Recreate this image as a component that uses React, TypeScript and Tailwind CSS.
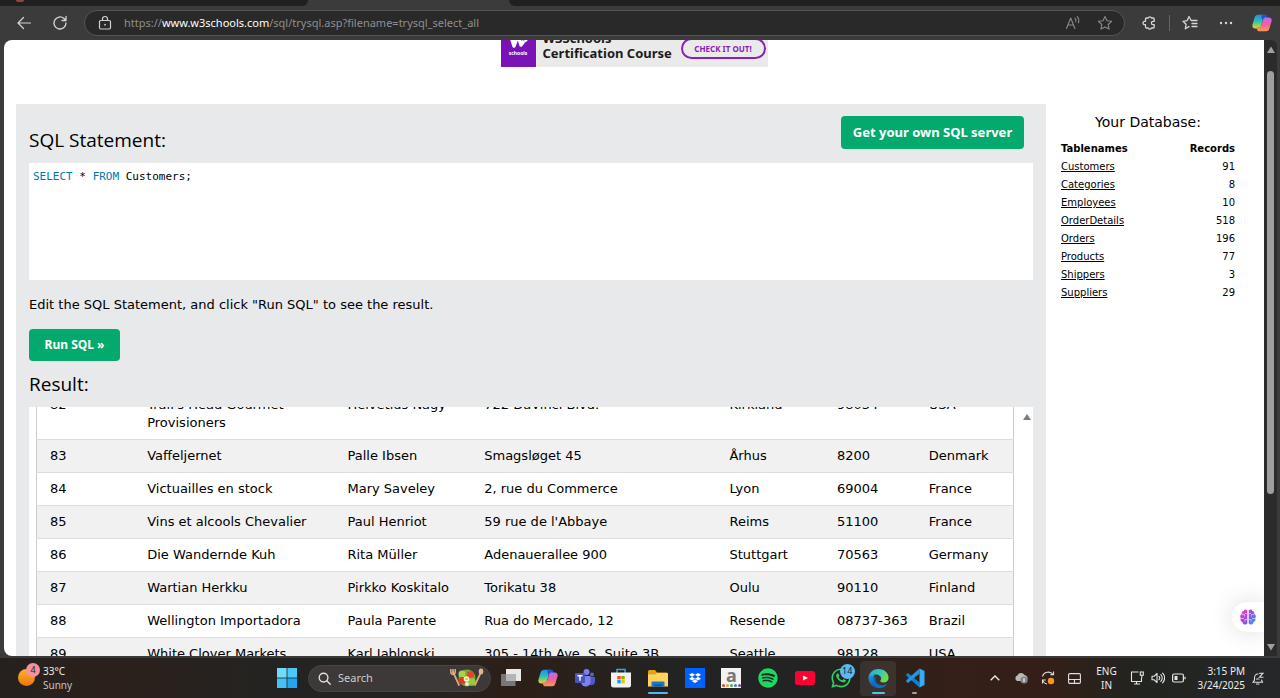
import { useId, useState } from "react";
import type { ReactNode } from "react";
import { FaDropbox, FaSpotify, FaWhatsapp } from "react-icons/fa";

type Customer = [string, string, string, string, string, string, string];

const customers: Customer[] = [
  ["82", "Trail's Head Gourmet Provisioners", "Helvetius Nagy", "722 DaVinci Blvd.", "Kirkland", "98034", "USA"],
  ["83", "Vaffeljernet", "Palle Ibsen", "Smagsløget 45", "Århus", "8200", "Denmark"],
  ["84", "Victuailles en stock", "Mary Saveley", "2, rue du Commerce", "Lyon", "69004", "France"],
  ["85", "Vins et alcools Chevalier", "Paul Henriot", "59 rue de l'Abbaye", "Reims", "51100", "France"],
  ["86", "Die Wandernde Kuh", "Rita Müller", "Adenauerallee 900", "Stuttgart", "70563", "Germany"],
  ["87", "Wartian Herkku", "Pirkko Koskitalo", "Torikatu 38", "Oulu", "90110", "Finland"],
  ["88", "Wellington Importadora", "Paula Parente", "Rua do Mercado, 12", "Resende", "08737-363", "Brazil"],
  ["89", "White Clover Markets", "Karl Jablonski", "305 - 14th Ave. S. Suite 3B", "Seattle", "98128", "USA"],
];

const tables: [string, number][] = [
  ["Customers", 91],
  ["Categories", 8],
  ["Employees", 10],
  ["OrderDetails", 518],
  ["Orders", 196],
  ["Products", 77],
  ["Shippers", 3],
  ["Suppliers", 29],
];

function IconButton({ label, className = "", children }: { label: string; className?: string; children: ReactNode }) {
  return (
    <button type="button" aria-label={label} className={`flex shrink-0 items-center justify-center ${className}`}>
      {children}
    </button>
  );
}

function CopilotIcon() {
  const id = useId();
  return (
    <svg viewBox="0 0 24 24" className="size-5">
      <defs>
        <linearGradient id={`${id}a`} x1="0" y1="0" x2="0" y2="1">
          <stop offset="0" stopColor="#1c8fe8" />
          <stop offset=".5" stopColor="#2cc3b0" />
          <stop offset="1" stopColor="#f3d323" />
        </linearGradient>
        <linearGradient id={`${id}b`} x1="0" y1="0" x2="0" y2="1">
          <stop offset="0" stopColor="#b56cf5" />
          <stop offset=".5" stopColor="#f0609c" />
          <stop offset="1" stopColor="#fb9a4b" />
        </linearGradient>
      </defs>
      <path d="M7 2h8c2 0 2.500 1 3 2.600L18.800 7H16c-2 0-2.800 1-3.400 3l-2 6c-.6 2-1.300 2.500-3.200 2.500H4c-3 0-4.200-2-3.300-5L3.200 5C3.900 3 5 2 7 2z" fill={`url(#${id}a)`} />
      <path d="M14 2h1.500c1.500 0 2.300 1 2.700 2.600L19 7h-3c-1.600 0-2.500.6-3.200 2.400L11.200 4.500C11.600 2.800 12.500 2 14 2z" fill="#2450c8" />
      <path d="M17 22H9c-2 0-2.500-1-3-2.600L5.300 17H8c2 0 2.800-1 3.400-3l2-6c.6-2 1.300-2.500 3.200-2.500H20c3 0 4.200 2 3.300 5L20.800 19c-.7 2-1.800 3-3.800 3z" fill={`url(#${id}b)`} />
    </svg>
  );
}

function BrowserChrome() {
  return (
    <header className="shrink-0 bg-[#3b3b3b]">
      <div className="flex h-[6px]">
        <div className="flex w-[308px] rounded-br-md bg-[#202020] pl-4">
          <span className="h-[2px] w-2 rounded-b-full bg-[#8d4a3c]" />
        </div>
        <div className="w-[201px] bg-[#3b3b3b]" />
        <div className="flex-1 rounded-bl-md bg-[#202020]" />
      </div>
      <div className="flex h-[34px] items-center text-[#d6d6d6]">
        <IconButton label="Back" className="ml-3 w-6">
          <svg viewBox="0 0 16 16" className="size-4" fill="none" stroke="currentColor" strokeWidth="1.2" strokeLinecap="round" strokeLinejoin="round">
            <path d="M14.500 8H2M7.500 2.500 2 8l5.500 5.500" />
          </svg>
        </IconButton>
        <IconButton label="Refresh" className="ml-3 w-6">
          <svg viewBox="0 0 16 16" className="size-4" fill="none" stroke="currentColor" strokeWidth="1.300" strokeLinecap="round" strokeLinejoin="round">
            <path d="M14 8a6 6 0 1 1-2-4.500l1.800 1.700M14 1.500v4h-4" />
          </svg>
        </IconButton>
        <div className="ml-3 flex h-[26px] flex-1 items-center rounded-full border border-[#555] bg-[#292929] pr-[9px] pl-[13px]">
          <svg viewBox="0 0 14 16" className="h-4 w-[14px] shrink-0" fill="none" stroke="#d0d0d0" strokeWidth="1.200">
            <rect x="1.500" y="5.500" width="11" height="8.500" rx="1.200" />
            <path d="M4.500 5.500V4a2.500 2.500 0 0 1 5 0v1.500" />
            <circle cx="7" cy="9.700" r=".9" fill="#d0d0d0" stroke="none" />
          </svg>
          <p className="ml-3 flex-1 truncate font-['Noto_Sans',sans-serif] text-[11px] text-[#8f8f8f]">
            https://<span className="text-white">www.w3schools.com</span>/sql/trysql.asp?filename=trysql_select_all
          </p>
          <IconButton label="Read aloud" className="w-5 text-[#8a8a8a]">
            <svg viewBox="0 0 16 16" className="size-4" fill="none" stroke="currentColor" strokeWidth="1.100" strokeLinecap="round" strokeLinejoin="round">
              <path d="M1.500 13.500 5.700 3l4.200 10.500M3 10h5.500M10 3.200a4 4 0 0 1 .8 3.600M12.300 1.500a7 7 0 0 1 1.200 6.300" />
            </svg>
          </IconButton>
          <IconButton label="Add to favorites" className="ml-3 w-5 text-[#8a8a8a]">
            <svg viewBox="0 0 16 16" className="size-4" fill="none" stroke="currentColor" strokeWidth="1.100" strokeLinejoin="round">
              <path d="m8 1.500 2 4.200 4.600.6-3.400 3.200.9 4.600L8 11.900l-4.100 2.200.9-4.600L1.400 6.300l4.600-.6z" />
            </svg>
          </IconButton>
        </div>
        <IconButton label="Extensions" className="ml-[14px] w-5">
          <svg viewBox="0 0 16 16" className="size-4" fill="none" stroke="currentColor" strokeWidth="1.300" strokeLinejoin="round">
            <path d="M5.500 3h1.700a1.700 1.700 0 0 1 3.200 0h1.800a1 1 0 0 1 1 1v2.400h-1.200a1.600 1.600 0 0 0 0 3.200h1.200V12a1 1 0 0 1-1 1h-1.800a1.700 1.700 0 0 1-3.200 0H5.500a1 1 0 0 1-1-1V9.700h-.8a1.700 1.700 0 0 1 0-3.400h.8V4a1 1 0 0 1 1-1z" />
          </svg>
        </IconButton>
        <span className="ml-[10px] h-4 w-px bg-[#666]" />
        <IconButton label="Favorites" className="ml-[10px] w-5">
          <svg viewBox="0 0 16 16" className="size-4" fill="none" stroke="currentColor" strokeWidth="1.300" strokeLinecap="round" strokeLinejoin="round">
            <path d="M9.300 5.500H15M10 8.500h5M10 11.500h5M8.800 5 7 1.500 5.200 5.600l-4.200.7 3.100 3-.8 4.500L7 11.600" />
          </svg>
        </IconButton>
        <IconButton label="Settings and more" className="ml-4 w-5">
          <svg viewBox="0 0 16 16" className="size-4" fill="currentColor">
            <circle cx="3" cy="8" r="1.200" />
            <circle cx="8" cy="8" r="1.200" />
            <circle cx="13" cy="8" r="1.200" />
          </svg>
        </IconButton>
        <IconButton label="Copilot" className="mr-2 ml-4 w-5">
          <CopilotIcon />
        </IconButton>
      </div>
    </header>
  );
}

function Banner() {
  return (
    <a href="#certification" className="mx-auto flex h-[27px] w-[267px] items-end overflow-hidden bg-[#eaeaea] font-['Noto_Sans',sans-serif] font-bold">
      <span className="flex h-[50px] w-[35px] shrink-0 flex-col items-center justify-end bg-[#7a12b8] pb-[11px] text-white">
        <svg viewBox="0 0 24 24" className="size-6" fill="none" stroke="#fff" strokeWidth="3.500" strokeLinejoin="round">
          <path d="m4 7 4 13 4-11 3 10 3-4M16 8h5l-3 4 3 3" />
        </svg>
        <span className="text-[5px] leading-[6px]">schools</span>
      </span>
      <span className="ml-[7px] w-[138px] shrink-0 pb-[6px] text-[13px] leading-[15px] whitespace-nowrap text-[#1c1c1c]">
        W3Schools
        <br />
        Certification Course
      </span>
      <span className="mb-[8px] flex h-[21px] w-[85px] shrink-0 items-center justify-center rounded-full border-2 border-[#8a22b8] text-[8px] whitespace-nowrap text-[#8a22b8]">
        CHECK IT OUT!
      </span>
    </a>
  );
}

function SqlEditor() {
  const [sql, setSql] = useState("SELECT * FROM Customers;");
  return (
    <div className="relative h-[117px] bg-white font-['DejaVu_Sans_Mono',monospace] text-[11px] leading-4">
      <pre aria-hidden="true" className="px-1 py-[6px] font-[inherit] text-black">
        {sql.split(/(\bSELECT\b|\bFROM\b)/).map((part, i) => (
          <span key={i} className={part === "SELECT" || part === "FROM" ? "text-[#0077aa]" : ""}>
            {part}
          </span>
        ))}
      </pre>
      <textarea
        aria-label="SQL Statement"
        spellCheck={false}
        value={sql}
        onChange={(e) => setSql(e.target.value)}
        className="absolute inset-0 resize-none bg-transparent px-1 py-[6px] text-transparent caret-black outline-none"
      />
    </div>
  );
}

function ResultTable() {
  return (
    <div className="flex min-h-0 flex-1 overflow-hidden bg-white pl-[7px]">
      <div className="min-w-0 flex-1">
        <table className="-mt-[19px] w-full table-fixed border-collapse border border-[#ccc] text-[13px] leading-[18px] text-black">
          <colgroup>
            <col className="w-[10%]" />
            <col className="w-[20.500%]" />
            <col className="w-[14%]" />
            <col className="w-[25.100%]" />
            <col className="w-[11%]" />
            <col className="w-[9.400%]" />
            <col className="w-[10%]" />
          </colgroup>
          <tbody>
            {customers.map((row) => (
              <tr key={row[0]} className="border-b border-[#ddd] odd:bg-white even:bg-[#f1f1f1]">
                {row.map((cell, i) => (
                  <td key={i} className="py-[7px] pl-[13px] align-top last:pr-0">
                    {cell}
                  </td>
                ))}
              </tr>
            ))}
          </tbody>
        </table>
      </div>
      <div className="ml-[7px] flex w-3 justify-center pt-[6px]">
        <svg viewBox="0 0 8 8" className="size-2" fill="#7b7b7b">
          <path d="M4 1 8 7H0z" />
        </svg>
      </div>
    </div>
  );
}

function DatabasePanel() {
  return (
    <aside className="w-[218px] shrink-0 pt-2 pr-[29px] pl-[15px]">
      <h2 className="text-center text-[14px] leading-5">Your Database:</h2>
      <table className="mt-2 w-full text-[10px] leading-[18px]">
        <thead>
          <tr>
            <th className="p-0 text-left">Tablenames</th>
            <th className="p-0 text-right">Records</th>
          </tr>
        </thead>
        <tbody>
          {tables.map(([name, count]) => (
            <tr key={name}>
              <td className="p-0">
                <a href={`#${name}`} className="underline">
                  {name}
                </a>
              </td>
              <td className="p-0 text-right">{count}</td>
            </tr>
          ))}
        </tbody>
      </table>
    </aside>
  );
}

function BrainIcon() {
  const id = useId();
  return (
    <svg viewBox="0 0 18 18" className="size-[18px]">
      <defs>
        <linearGradient id={id} x1="0" y1="0" x2="18" y2="14" gradientUnits="userSpaceOnUse">
          <stop offset="0" stopColor="#f56a5c" />
          <stop offset=".4" stopColor="#c63ee0" />
          <stop offset=".65" stopColor="#7a5cf0" />
          <stop offset="1" stopColor="#2fa8f5" />
        </linearGradient>
      </defs>
      <g fill={`url(#${id})`}>
        <path d="M8.300 2.500C7.500 1 5.300 1.200 4.800 2.900 3 3 2.300 4.700 2.900 6 1 6.600.600 9 1.800 10.200c-.9 1.600 0 3.300 1.500 3.700C3.600 16.500 7 17.500 8.300 15.500z" />
        <path d="M9.700 2.500c.8-1.500 3-1.300 3.500.4 1.800.1 2.500 1.800 1.900 3.100 1.900.6 2.300 3 1.100 4.200.9 1.600 0 3.300-1.500 3.700-.3 2.600-3.700 3.600-5 1.600z" />
      </g>
      <path d="M3 6.500h2.500v2M2 10.500h3M8 5.500H6M8 11.500H6v2M15 6.500h-2.500v2M16 10.500h-3M10 5.500h2M10 11.500h2v2" fill="none" stroke="#fff" strokeWidth=".5" />
    </svg>
  );
}

function Page() {
  return (
    <div className="relative flex min-h-0 flex-1 pr-[3px] pl-1">
      <main className="relative flex min-w-0 flex-1 flex-col overflow-hidden rounded-l-lg bg-white font-['DejaVu_Sans',Verdana,sans-serif] text-black">
        <Banner />
        <div className="mt-[37px] flex min-h-0 flex-1 pl-3">
          <section className="flex min-w-0 flex-1 flex-col bg-[#e7e9eb] px-[13px]">
            <div className="flex h-[59px] justify-between pt-3 pr-[9px]">
              <h1 className="pt-[10px] font-['Open_Sans','Segoe_UI',sans-serif] text-[19px] leading-7">SQL Statement:</h1>
              <a href="#sql-server" className="flex h-[33px] w-[183px] items-center justify-center rounded-[4px] bg-[#04aa6d] font-['Noto_Sans',sans-serif] text-[13px] font-bold whitespace-nowrap text-white">
                Get your own SQL server
              </a>
            </div>
            <SqlEditor />
            <p className="mt-4 text-[13px] leading-[18px]">Edit the SQL Statement, and click "Run SQL" to see the result.</p>
            <button type="button" className="mt-[15px] flex h-8 w-[91px] shrink-0 items-center justify-center self-start rounded-[4px] bg-[#04aa6d] font-['Noto_Sans',sans-serif] text-xs font-bold text-white">
              Run SQL »
            </button>
            <h2 className="mt-[9px] mb-[9px] font-['Open_Sans','Segoe_UI',sans-serif] text-[19px] leading-7">Result:</h2>
            <ResultTable />
          </section>
          <DatabasePanel />
        </div>
        <button type="button" aria-label="Open assistant" className="absolute right-0 bottom-6 flex h-[30px] w-8 items-center justify-center rounded-l-full bg-white shadow-[0_0_24px_rgba(0,0,0,0.14)]">
          <BrainIcon />
        </button>
      </main>
      <div className="flex w-[13px] flex-col items-center rounded-tr-md bg-[#2b2b2b] pt-[6px] pb-[5px]">
        <svg viewBox="0 0 8 8" className="size-2" fill="#a0a0a0">
          <path d="M4 0.500 8 7H0z" />
        </svg>
        <div className="mt-[17px] flex w-full flex-1 justify-center">
          <div className="h-[74%] w-[7px] rounded-full bg-[#9e9e9e]" />
        </div>
        <svg viewBox="0 0 8 8" className="size-2" fill="#a0a0a0">
          <path d="M4 7.500 8 1H0z" />
        </svg>
      </div>
    </div>
  );
}

function TaskbarApp({ label, active = false, marker = "", children }: { label: string; active?: boolean; marker?: string; children: ReactNode }) {
  return (
    <button type="button" aria-label={label} className={`relative flex h-[35px] flex-1 items-center justify-center rounded ${active ? "bg-white/8" : ""}`}>
      {children}
      {marker && <span className={`absolute bottom-[2px] h-[2px] rounded-full ${marker}`} />}
    </button>
  );
}

function SaladIcon() {
  return (
    <svg viewBox="0 0 34 20" className="h-5 w-[34px]">
      <path d="m3 4 6 13M31 4l-6 13" stroke="#d9a679" strokeWidth="1.800" strokeLinecap="round" />
      <path d="M.8 1v3c0 3 4.400 3 4.400.5V1M3 1v4" fill="none" stroke="#e2b58a" strokeWidth="1.400" />
      <ellipse cx="31" cy="3.500" rx="2.300" ry="3" fill="#e2b58a" />
      <circle cx="17" cy="10" r="8.500" fill="#6fae35" />
      <circle cx="12" cy="6" r="3.500" fill="#a6d34e" />
      <circle cx="22" cy="14" r="3.800" fill="#97c93f" />
      <circle cx="12" cy="12.500" r="3.600" fill="#d83a25" />
      <circle cx="20.500" cy="6.500" r="3.600" fill="#e5452b" />
      <circle cx="16.500" cy="11" r="2.800" fill="#fff6dd" />
      <circle cx="16.500" cy="11" r="1.300" fill="#f5b829" />
      <circle cx="17" cy="16" r="2" fill="#f2ead0" />
    </svg>
  );
}

function TeamsIcon() {
  return (
    <svg viewBox="0 0 20 20" className="size-5">
      <circle cx="17" cy="6.500" r="2" fill="#5a62c3" />
      <circle cx="11.500" cy="4" r="3" fill="#7b83eb" />
      <path d="M14.500 9H20v5a3.500 3.500 0 0 1-5.500 2.500z" fill="#5059c9" />
      <path d="M6.500 8h9v6a4.800 4.800 0 0 1-9 2z" fill="#7b83eb" />
      <rect y="5" width="10" height="10" rx="1" fill="#4b53bc" />
      <path d="M2.500 7.700h5M5 7.700v5" stroke="#fff" strokeWidth="1.400" />
    </svg>
  );
}

function StoreIcon() {
  return (
    <svg viewBox="0 0 20 20" className="size-5">
      <path d="M6 5V1.500h8V5" fill="none" stroke="#35a8e0" strokeWidth="1.500" />
      <path d="M0 4.500h20V17a2.500 2.500 0 0 1-2.500 2.500h-15A2.500 2.500 0 0 1 0 17z" fill="#f2f2f2" />
      <path d="M6.300 8h3.400v3.400H6.300z" fill="#f25022" />
      <path d="M10.300 8h3.400v3.400h-3.400z" fill="#7fba00" />
      <path d="M6.300 12h3.400v3.400H6.300z" fill="#00a4ef" />
      <path d="M10.300 12h3.400v3.400h-3.400z" fill="#ffb900" />
    </svg>
  );
}

function ExplorerIcon() {
  return (
    <svg viewBox="0 0 20 18" className="h-[18px] w-5">
      <path d="M0 2.500A1.500 1.500 0 0 1 1.500 1H7l2 2.500h9.500A1.500 1.500 0 0 1 20 5v2H0z" fill="#e3a21a" />
      <path d="M0 5.500h7l2-1.500h10a1 1 0 0 1 1 1v12.500H0z" fill="#ffd45c" />
      <path d="M3.500 17.500v-4a1 1 0 0 1 1-1h11a1 1 0 0 1 1 1v4z" fill="#1a77c9" />
      <path d="M6 15.500h8v2H6z" fill="#0f5a9e" />
    </svg>
  );
}

function EdgeIcon() {
  const id = useId();
  return (
    <svg viewBox="0 0 24 24" className="size-[21px]">
      <defs>
        <linearGradient id={`${id}a`} x1="0" y1="0" x2="1" y2=".4">
          <stop offset="0" stopColor="#2ba5e8" />
          <stop offset=".6" stopColor="#36c9b8" />
          <stop offset="1" stopColor="#6ddc4e" />
        </linearGradient>
        <linearGradient id={`${id}b`} x1="0" y1="0" x2="0" y2="1">
          <stop offset="0" stopColor="#1b9de2" />
          <stop offset="1" stopColor="#1153a8" />
        </linearGradient>
      </defs>
      <path d="M.5 11C1.500 4.500 6 1 12 1c7 0 11.500 5 11.500 10 0 3.500-2.500 5.500-5.800 5.500-3 0-4.300-1.200-3.500-2.300.8-1 .8-1.700.8-2.200 0-2.500-2.600-4.500-6-4.500-4 0-7 2-8.500 3.500z" fill={`url(#${id}a)`} />
      <path d="M.5 11C2 8.500 5 7.200 8.500 7.500 5.800 9 6 13 7.500 16c2 4 6 6 10.500 5.200A11.500 11.500 0 0 1 .5 12z" fill={`url(#${id}b)`} />
      <path d="M9.500 10c-2 2.500-1.300 6.500 1.500 8.300 3.500 2.200 8 1.500 11-.3-2 3.200-5.300 5.300-9 5-5-.5-8-5-7-9.500.3-1.800 1.700-3.200 3.500-3.500z" fill="#0d6fc4" />
    </svg>
  );
}

function VsCodeIcon() {
  return (
    <svg viewBox="0 0 20 20" className="size-5">
      <path d="M1.300 6.300 3 5l11.500 9.500V19.500L1.300 7.700z" fill="#1580c5" />
      <path d="M1.300 13.700 3 15 14.500 5.500V.5L1.300 12.300z" fill="#2196e3" />
      <path d="M14.500.5 19.500 3v14l-5 2.500z" fill="#35adf5" />
    </svg>
  );
}

function AmazonIcon() {
  return (
    <span className="flex size-5 flex-col items-center justify-between bg-[#f2f2f2] pb-px font-['Noto_Sans',sans-serif] text-lg leading-[15px] font-bold text-[#777]">
      a
      <span className="flex gap-px">
        <span className="size-[3px] rounded-full bg-[#e33b2e]" />
        <span className="size-[3px] rounded-full bg-[#f29a1f]" />
        <span className="size-[3px] rounded-full bg-[#55a845]" />
        <span className="size-[3px] rounded-full bg-[#2e7fd0]" />
        <span className="size-[3px] rounded-full bg-[#8347b5]" />
      </span>
    </span>
  );
}

function Taskbar() {
  return (
    <footer className="flex h-[40px] shrink-0 items-center bg-[linear-gradient(90deg,#26211f_0%,#2b201b_9%,#252321_20%,#252321_32%,#2d1f18_40%,#232322_52%,#222322_64%,#351f18_74%,#331f18_82%,#22241f_89%,#25272a_100%)] font-['Noto_Sans',sans-serif] text-[#eee]">
      <button type="button" className="flex w-[268px] items-center pl-[18px] text-left text-[10px] leading-[14px]">
        <span className="relative size-5">
          <span className="absolute bottom-[2px] left-0 size-[17px] rounded-full bg-linear-to-b from-[#ffb02a] to-[#e8780a]" />
          <span className="absolute -top-[5px] left-2 flex size-[14px] items-center justify-center rounded-full bg-[#f7919b] text-[9px] text-[#222]">4</span>
        </span>
        <span className="ml-[5px]">
          33°C
          <br />
          <span className="text-[#c4c4c4]">Sunny</span>
        </span>
      </button>
      <IconButton label="Start" className="w-[38px]">
        <svg viewBox="0 0 20 20" className="size-5">
          <path d="M0 0h9.600v9.600H0z" fill="#6fdcfb" />
          <path d="M10.400 0H20v9.600h-9.600z" fill="#4cc8f8" />
          <path d="M0 10.400h9.600V20H0z" fill="#44c2f7" />
          <path d="M10.400 10.400H20V20h-9.600z" fill="#1fa7f2" />
        </svg>
      </IconButton>
      <label className="ml-[2px] flex h-[27px] w-[183px] items-center rounded-full border border-[#484542] bg-[#3c3938] pr-[6px] pl-[9px]">
        <svg viewBox="0 0 14 14" className="size-[13px] shrink-0" fill="none" stroke="#e0e0e0" strokeWidth="1.500" strokeLinecap="round">
          <circle cx="6" cy="6" r="4.700" />
          <path d="m9.500 9.500 3.700 3.700" />
        </svg>
        <input aria-label="Search" placeholder="Search" className="ml-[7px] w-0 min-w-0 flex-1 bg-transparent text-[11px] outline-none placeholder:text-[#ccc]" />
        <SaladIcon />
      </label>
      <nav className="ml-[2px] flex w-[440px] items-center">
        <TaskbarApp label="Task view">
          <svg viewBox="0 0 20 20" className="size-5">
            <path d="M5 1h15v12H5z" fill="#e9e9e9" />
            <path d="M0 6h14.500v12H0z" fill="#777" />
            <path d="M5 6h9.500v7H5z" fill="#b5b5b5" />
          </svg>
        </TaskbarApp>
        <TaskbarApp label="Copilot">
          <CopilotIcon />
        </TaskbarApp>
        <TaskbarApp label="Teams">
          <TeamsIcon />
        </TaskbarApp>
        <TaskbarApp label="Microsoft Store">
          <StoreIcon />
        </TaskbarApp>
        <TaskbarApp label="File Explorer" marker="w-5 bg-[#55b7e8]">
          <ExplorerIcon />
        </TaskbarApp>
        <TaskbarApp label="Dropbox">
          <span className="flex size-5 items-center justify-center bg-[#0061fe]">
            <FaDropbox className="size-3 text-white" />
          </span>
        </TaskbarApp>
        <TaskbarApp label="Amazon">
          <AmazonIcon />
        </TaskbarApp>
        <TaskbarApp label="Spotify">
          <FaSpotify className="size-5 text-[#1ed760]" />
        </TaskbarApp>
        <TaskbarApp label="YouTube">
          <svg viewBox="0 0 20 14" className="h-[14px] w-5">
            <rect width="20" height="14" rx="2.500" fill="#ff0033" />
            <path d="m8 4.500 5 2.500-5 2.500z" fill="#fff" />
          </svg>
        </TaskbarApp>
        <TaskbarApp label="WhatsApp">
          <FaWhatsapp className="size-[22px] text-[#2bd366]" />
          <span className="absolute top-[3px] right-[5px] flex size-[15px] items-center justify-center rounded-full bg-[#5cb8f0] text-[9px] text-[#10202c]">14</span>
        </TaskbarApp>
        <TaskbarApp label="Edge" active marker="w-[13px] bg-[#55c2ea]">
          <EdgeIcon />
        </TaskbarApp>
        <TaskbarApp label="Visual Studio Code" marker="w-[5px] bg-[#a5a09c]">
          <VsCodeIcon />
        </TaskbarApp>
      </nav>
      <div className="ml-auto flex items-center pr-4 text-[10px] leading-[14px]">
        <IconButton label="Show hidden icons" className="w-[26px]">
          <svg viewBox="0 0 10 6" className="h-[6px] w-[10px]" fill="none" stroke="currentColor" strokeWidth="1.300">
            <path d="M.7 5.200 5 1l4.300 4.200" />
          </svg>
        </IconButton>
        <IconButton label="OneDrive" className="w-[26px]">
          <svg viewBox="0 0 14 12" className="h-3 w-[14px]">
            <path d="M3 9a3 3 0 0 1 .3-5.500A4 4 0 0 1 10.500 3C13 3.500 14 5.500 13.300 7.500 13 8.500 12 9 11 9z" fill="#b9b9b9" />
            <circle cx="10" cy="8" r="3.600" fill="#858585" />
            <path d="M10 6.300v3.400" stroke="#fff" strokeWidth="1.200" />
          </svg>
        </IconButton>
        <IconButton label="Windows Update" className="w-[27px]">
          <svg viewBox="0 0 14 14" className="size-[14px]" fill="none" stroke="#e0e0e0" strokeWidth="1.100">
            <path d="M1.500 5.500A6 6 0 0 1 12 3.500M12.500.5v3.200H9.300M1.500 8.500A6 6 0 0 0 6 13M1.500 12.500V9h3.300" />
            <circle cx="10" cy="10" r="3.200" fill="#f79a1c" stroke="none" />
          </svg>
        </IconButton>
        <IconButton label="Touchpad" className="w-[27px]">
          <svg viewBox="0 0 13 11" className="h-[11px] w-[13px]" fill="none" stroke="#e0e0e0" strokeWidth="1.100">
            <rect x=".6" y=".6" width="11.800" height="9.800" rx="1.200" />
            <path d="M.6 6.500h11.800M6.500 6.500v4" />
          </svg>
        </IconButton>
        <button type="button" className="w-[37px] text-center">
          ENG
          <br />
          IN
        </button>
        <button type="button" aria-label="Network, volume, battery" className="flex w-[65px] items-center justify-center gap-[7px]">
          <svg viewBox="0 0 14 14" className="size-[14px]" fill="none" stroke="#e6e6e6" strokeWidth="1.100">
            <path d="M8.500 1H1.500v9.500h10V6.500M4 13h6M6.500 10.500V13" />
            <rect x="10.300" y="1" width="3" height="3.200" />
            <path d="M11.800 4.200v2.500" />
          </svg>
          <svg viewBox="0 0 14 12" className="h-3 w-[14px]" fill="none" stroke="#e6e6e6" strokeWidth="1.100" strokeLinecap="round" strokeLinejoin="round">
            <path d="M1 4.300h2L6 1.500v9L3 7.700H1zM8 4.300a2.500 2.500 0 0 1 0 3.400M9.800 2.700a4.600 4.600 0 0 1 0 6.600M11.600 1.200a6.800 6.800 0 0 1 0 9.600" />
          </svg>
          <svg viewBox="0 0 14 10" className="h-[10px] w-[14px]" fill="none" stroke="#e6e6e6" strokeWidth="1.200">
            <rect x=".6" y="1" width="10.800" height="8" rx="1.500" />
            <path d="M13 3.700v2.600" />
            <path d="M2.500 3h3v4h-3z" fill="#e6e6e6" stroke="none" />
          </svg>
        </button>
        <button type="button" className="w-[55px] text-right whitespace-nowrap">
          3:15 PM
          <br />
          3/24/2025
        </button>
        <IconButton label="Notifications" className="ml-[7px] w-3">
          <svg viewBox="0 0 12 13" className="h-[13px] w-3" fill="none" stroke="#e0e0e0" strokeWidth="1.100" strokeLinecap="round">
            <path d="M6 2C3.500 2 2.500 4 2.500 6v2L1 10.300h9.500L9.500 8M4.500 12h2.500M7.500 1.200h3.500l-3.500 4H11M4.500 7h2.500" />
          </svg>
        </IconButton>
      </div>
    </footer>
  );
}

export default function App() {
  return (
    <div className="flex h-screen flex-col bg-[#3b3b3b]">
      <BrowserChrome />
      <Page />
      <div className="h-[2px] shrink-0" />
      <Taskbar />
    </div>
  );
}
